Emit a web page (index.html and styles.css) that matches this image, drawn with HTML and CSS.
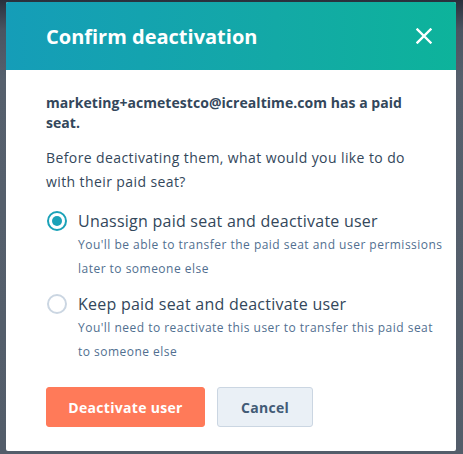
FILE: index.html
```html
<!DOCTYPE html>
<html>
<head>
<meta charset="utf-8">
<link rel="stylesheet" href="styles.css">
</head>
<body>
<div class="modal">
  <div class="header">
    <h1 class="title">Confirm deactivation</h1>
    <button class="close" aria-label="Close">
      <svg width="16" height="16" viewBox="0 0 16 16"><path d="M1.5 1.5 L14.5 14.5 M14.5 1.5 L1.5 14.5" stroke="#fff" stroke-width="2.4" stroke-linecap="square" fill="none"/></svg>
    </button>
  </div>
  <div class="body">
    <p class="lead">marketing+acmetestco@icrealtime.com has a paid<br>seat.</p>
    <p class="question">Before deactivating them, what would you like to do<br>with their paid seat?</p>
    <div class="options">
      <label class="option">
        <span class="radio checked"></span>
        <span class="option-text">
          <span class="option-label">Unassign paid seat and deactivate user</span>
          <span class="option-help">You'll be able to transfer the paid seat and user permissions<br>later to someone else</span>
        </span>
      </label>
      <label class="option second">
        <span class="radio"></span>
        <span class="option-text">
          <span class="option-label">Keep paid seat and deactivate user</span>
          <span class="option-help">You'll need to reactivate this user to transfer this paid seat<br>to someone else</span>
        </span>
      </label>
    </div>
    <div class="actions">
      <button class="btn primary">Deactivate user</button>
      <button class="btn secondary">Cancel</button>
    </div>
  </div>
</div>
</body>
</html>
```
FILE: styles.css
```css
html, body {
  margin: 0;
  padding: 0;
}
body {
  width: 463px;
  height: 454px;
  overflow: hidden;
  background: linear-gradient(180deg, #29303c 0px, #4a5461 30px, #56606d 80px, #535d6a 100%);
  font-family: "Open Sans", sans-serif;
  color: #33475b;
}
.modal {
  width: 450px;
  height: 449px;
  margin: 2px 0 0 6px;
  background: #fff;
  border-radius: 2px;
  overflow: hidden;
}
.header {
  height: 68px;
  box-sizing: border-box;
  padding: 0 24px 0 40px;
  display: flex;
  align-items: center;
  justify-content: space-between;
  background: linear-gradient(90deg, #159db8 0%, #13a9a6 60%, #0db39b 100%);
}
.title {
  margin: 0;
  font-size: 20px;
  font-weight: 700;
  color: #fff;
  letter-spacing: 0;
}
.close {
  border: 0;
  background: none;
  padding: 0;
  width: 16px;
  height: 16px;
  display: flex;
}
.body {
  padding: 23px 24px 24px 40px;
}
.lead {
  margin: 0;
  font-size: 14px;
  font-weight: 700;
  line-height: 20px;
  letter-spacing: 0.05px;
  white-space: nowrap;
}
.question {
  margin: 13px 0 0 0;
  font-size: 14px;
  line-height: 24px;
  letter-spacing: 0.4px;
  white-space: nowrap;
}
.options {
  margin-top: 15px;
  display: flex;
  flex-direction: column;
  gap: 11px;
}
.option {
  display: flex;
  align-items: flex-start;
  gap: 11px;
}
.radio {
  flex: none;
  width: 20px;
  height: 20px;
  box-sizing: border-box;
  margin: 2px 0 0 1px;
  border: 2px solid #cbd6e2;
  border-radius: 50%;
  display: flex;
  align-items: center;
  justify-content: center;
}
.radio.checked {
  border-color: #1ba2b8;
}
.radio.checked::after {
  content: "";
  width: 10px;
  height: 10px;
  border-radius: 50%;
  background: #1ba2b8;
}
.option-text {
  display: flex;
  flex-direction: column;
}
.option-label {
  font-size: 16px;
  line-height: 24px;
  letter-spacing: 0.24px;
  white-space: nowrap;
}
.option-help {
  font-size: 12px;
  line-height: 24px;
  color: #516f90;
  letter-spacing: 0.48px;
  white-space: nowrap;
}
.actions {
  margin-top: 23px;
  display: flex;
  gap: 12px;
}
.btn {
  height: 40px;
  box-sizing: border-box;
  border-radius: 3px;
  font-family: inherit;
  font-size: 14px;
  font-weight: 700;
  padding: 0;
  letter-spacing: 0.3px;
}
.primary {
  width: 159px;
  background: #ff7a59;
  border: 1px solid #ff7a59;
  color: #fff;
}
.secondary {
  width: 96px;
  background: #eaf0f6;
  border: 1px solid #cbd6e2;
  color: #425b76;
}
```
